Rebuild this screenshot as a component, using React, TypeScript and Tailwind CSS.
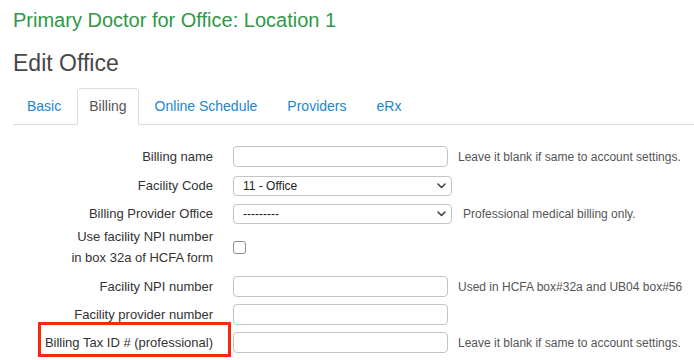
import React from "react";

const font = { fontFamily: '"Liberation Sans", Arial, sans-serif' };

const tabs = ["Basic", "Billing", "Online Schedule", "Providers", "eRx"];

function Chevron() {
  return (
    <svg width="9" height="6" viewBox="0 0 9 6" className="shrink-0">
      <path d="M1 1 L4.5 4.5 L8 1" fill="none" stroke="#444" strokeWidth="1.6" strokeLinecap="round" strokeLinejoin="round" />
    </svg>
  );
}

function TextBox() {
  return <div className="h-[21px] w-[215px] shrink-0 rounded-[4px] border border-[#c4c4c4] bg-white" />;
}

function SelectBox({ value }: { value: string }) {
  return (
    <div className="flex h-[20px] w-[219px] shrink-0 items-center justify-between rounded-[4px] border border-[#c4c4c4] bg-white pl-[9px] pr-[5px] text-[12px] text-[#222]">
      <span>{value}</span>
      <Chevron />
    </div>
  );
}

function Help({ children, ml = "ml-[10px]" }: { children: React.ReactNode; ml?: string }) {
  return <span className={`${ml} text-[12px] text-[#555]`}>{children}</span>;
}

function Label({ children }: { children: React.ReactNode }) {
  return <div className="w-[200px] shrink-0 text-right text-[13px] leading-[21px] text-[#333]">{children}</div>;
}

export default function App() {
  return (
    <div className="min-h-[360px] w-[694px] overflow-hidden bg-white pl-[13px] pt-[6px]" style={font}>
      <h1 className="text-[20px] leading-[28px] text-[#2f9848]">Primary Doctor for Office: Location 1</h1>
      <h2 className="mt-[14px] text-[23px] font-light leading-[30px] text-[#474747]">Edit Office</h2>

      {/* tabs */}
      <ul className="mt-[10px] flex border-b border-[#dddddd]">
        {tabs.map((t) => {
          const active = t === "Billing";
          return (
            <li
              key={t}
              className={
                active
                  ? "-mb-px mr-[2px] rounded-t-[4px] border border-[#dddddd] border-b-white bg-white px-[11px] pb-[8px] pt-[7px] text-[14px] leading-[20px] text-[#555]"
                  : "-mb-px mr-[2px] border border-transparent px-[13px] pb-[8px] pt-[7px] text-[14px] leading-[20px] text-[#1a87cf]"
              }
            >
              {t}
            </li>
          );
        })}
      </ul>

      {/* form */}
      <div className="flex flex-col">
        <div className="mt-[21px] flex items-center">
          <Label>Billing name</Label>
          <div className="ml-[20px]"><TextBox /></div>
          <Help>Leave it blank if same to account settings.</Help>
        </div>

        <div className="mt-[8px] flex items-center">
          <Label>Facility Code</Label>
          <div className="ml-[20px]"><SelectBox value="11 - Office" /></div>
        </div>

        <div className="mt-[7px] flex items-center">
          <Label>Billing Provider Office</Label>
          <div className="ml-[20px]"><SelectBox value="---------" /></div>
          <Help ml="ml-[11px]">Professional medical billing only.</Help>
        </div>

        <div className="mt-[2px] flex items-center">
          <Label>
            Use facility NPI number
            <br />
            in box 32a of HCFA form
          </Label>
          <div className="ml-[20px] h-[13px] w-[13px] rounded-[3px] border border-[#8a8a8a] bg-white" />
        </div>

        <div className="mt-[8px] flex items-center">
          <Label>Facility NPI number</Label>
          <div className="ml-[20px]"><TextBox /></div>
          <Help>Used in HCFA box#32a and UB04 box#56</Help>
        </div>

        <div className="mt-[7px] flex items-center">
          <Label>Facility provider number</Label>
          <div className="ml-[20px]"><TextBox /></div>
        </div>

        <div className="mt-[7px] flex items-center">
          <div className="relative">
            <Label>Billing Tax ID # (professional)</Label>
            <span className="absolute left-[25px] top-[-10px] h-[35px] w-[193px] border-[3px] border-[#f5290b]" />
          </div>
          <div className="ml-[20px]"><TextBox /></div>
          <Help>Leave it blank if same to account settings.</Help>
        </div>
      </div>
    </div>
  );
}
